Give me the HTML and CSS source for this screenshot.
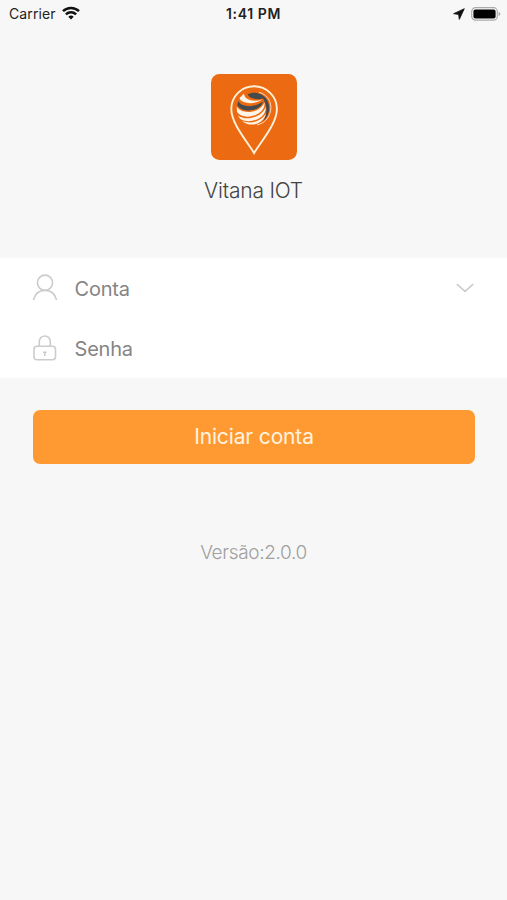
FILE: index.html
```html
<!DOCTYPE html>
<html lang="pt">
<head>
  <meta charset="UTF-8">
  <meta name="viewport" content="width=device-width, initial-scale=1.0">
  <title>Vitana IOT</title>
  <link rel="stylesheet" href="styles.css">
</head>
<body>
  <header class="status-bar">
    <div class="carrier">
      <span>Carrier</span>
      <svg class="wifi" width="18" height="14" viewBox="0 0 18 14" fill="none" stroke="#111" stroke-width="2.5">
        <path d="M1 5.200a11.400 11.400 0 0 1 16 0"/>
        <path d="M3.900 8.300a7.300 7.300 0 0 1 10.200 0"/>
        <path d="M9 13.500 6.300 10.700a3.900 3.900 0 0 1 5.400 0z" fill="#111" stroke="none"/>
      </svg>
    </div>
    <span class="time">1:41 PM</span>
    <div class="indicators">
      <svg width="12" height="12" viewBox="0 0 12 12">
        <path d="M11.300.7.6 5.700l5 .7.700 5z" fill="#111" stroke="#111" stroke-width=".8" stroke-linejoin="round"/>
      </svg>
      <svg width="30" height="14" viewBox="0 0 30 14">
        <rect x=".7" y=".7" width="25.600" height="12.400" rx="3.800" fill="#fafafa" stroke="#aaa" stroke-width="1.200"/>
        <rect x="2.400" y="2.400" width="22.200" height="9" rx="2" fill="#000"/>
        <path d="M27.600 4.700q1.800.7 1.800 2.200t-1.800 2.200z" fill="#aaa"/>
      </svg>
    </div>
  </header>

  <main>
    <section class="brand">
      <svg class="logo" width="86" height="86" viewBox="0 0 86 86">
        <rect width="86" height="86" rx="8.500" fill="#ec6b12"/>
        <path d="M43.100 79C37 68.500 20.300 50 20.300 35a22.800 22.800 0 0 1 45.600 0C65.900 50 49.200 68.500 43.100 79z" fill="none" stroke="#fff0d8" stroke-width="1.900"/>
        <!-- globe bands -->
        <path d="M33 19.500C33 25.500 42 28.500 51 25.500C43 31.500 30 29.500 28.500 24z" fill="#fff4e6"/>
        <path d="M36.500 20.500C42 17 51 18.500 55.500 25C60 32 59 41.500 52 47.500C56.500 40 56.500 32 52 24.500C46 26 39 25 36.500 20.500z" fill="#454a4d"/>
        <path d="M27.300 26.800C29.500 33 43 34.500 52 27.500C49.500 38 30.500 39.500 26.300 31z" fill="#454a4d"/>
        <path d="M25.700 32.500C30 40.500 48.500 40 53.500 28.500C55 41.500 32.500 47.500 26 38z" fill="#fff4e6"/>
        <path d="M27 41.200C34 47.500 50.500 44 54.800 33C55.500 45.500 36.500 51 28.800 44.500z" fill="#fff4e6"/>
        <path d="M31 47C40 50.500 50.500 47.500 55 39.500C52.500 50.500 39 54 31 47z" fill="#fff4e6"/>
        <path d="M48 18.300C56.500 20.500 61 28 59.600 36.500C58.300 44 53 49.500 46 51" fill="none" stroke="#fff4e6" stroke-width=".8"/>
      </svg>
      <h1>Vitana IOT</h1>
    </section>

    <form class="login-form">
      <div class="fields">
        <label class="field">
          <svg class="field-icon" width="26" height="28" viewBox="0 0 26 28">
            <circle cx="13" cy="8.700" r="7.600"/>
            <path d="M1.400 26C3 19.700 7.500 16.400 13 16.400S23 19.700 24.600 26"/>
          </svg>
          <span class="field-text">Conta</span>
          <svg class="chevron" width="18" height="10" viewBox="0 0 18 10">
            <path d="M.8 1.200 9 8.400 17.200 1.200"/>
          </svg>
        </label>
        <label class="field">
          <svg class="field-icon" width="26" height="28" viewBox="0 0 26 28">
            <rect x="2" y="12.300" width="21.500" height="13.500" rx="3"/>
            <path d="M7.300 12.300V7.500a5.500 5.500 0 0 1 11 0v4.800"/>
            <path d="M12.800 17.500v4.500M11 18.300h3.600"/>
          </svg>
          <span class="field-text">Senha</span>
        </label>
      </div>
      <button type="button" class="login-button">Iniciar conta</button>
    </form>

    <p class="version">Versão:2.0.0</p>
  </main>
</body>
</html>
```
FILE: styles.css
```css
body {
  margin: 0;
  min-height: 900px;
  background-color: #f7f7f7;
  font-family: Inter, "Liberation Sans", sans-serif;
}
svg {
  display: block;
  flex-shrink: 0;
}
.status-bar {
  display: grid;
  grid-template-columns: 1fr auto 1fr;
  align-items: center;
  height: 27px;
  padding: 0 6px 0 9px;
  color: #222;
  font-size: 14px;
}
.carrier {
  display: flex;
  align-items: center;
  gap: 6px;
  letter-spacing: 0.1px;
}
.wifi {
  margin-top: -2px;
}
.time {
  margin-right: 3px;
  font-weight: 600;
  letter-spacing: 0.6px;
}
.indicators {
  display: flex;
  align-items: center;
  justify-content: flex-end;
  gap: 6px;
}
.brand {
  display: flex;
  flex-direction: column;
  align-items: center;
  height: 184px;
  padding-top: 47px;
}
.brand h1 {
  margin: 17px 0 0;
  color: #444;
  font-size: 21px;
  font-weight: 300;
  line-height: 28px;
  letter-spacing: -0.2px;
}
.fields {
  background-color: #fff;
}
.field {
  display: flex;
  align-items: center;
  height: 60px;
  padding: 0 33px 0 32px;
}
.field-icon, .chevron {
  fill: none;
  stroke: #ccc;
  stroke-width: 1.6;
}
.field-text {
  flex: 1;
  margin-left: 16.5px;
  padding-top: 2px;
  color: #858585;
  font-size: 20px;
  letter-spacing: -0.2px;
}
.login-button {
  display: block;
  width: 442px;
  height: 54px;
  margin: 31.5px auto 0 33px;
  padding: 0;
  border: none;
  border-radius: 7px;
  background-color: #ff9a33;
  color: #fff3df;
  font-family: inherit;
  font-size: 21px;
  letter-spacing: -0.15px;
}
.version {
  margin: 75.5px 0 0;
  color: #a0a0a0;
  font-size: 19px;
  font-weight: 300;
  line-height: 28px;
  letter-spacing: -0.35px;
  text-align: center;
}
```
